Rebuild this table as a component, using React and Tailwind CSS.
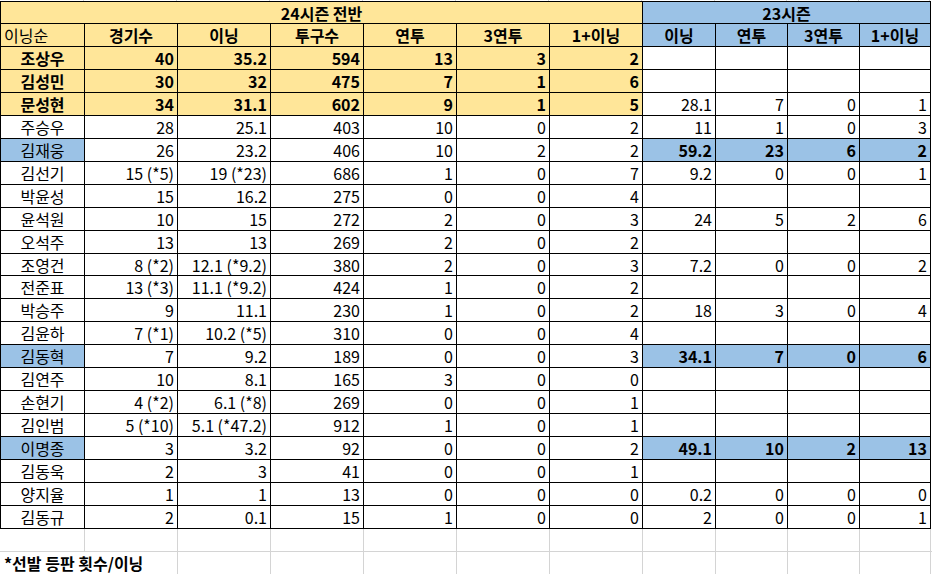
import React from 'react';
import clsx from 'clsx';

const widths = [
  'w-[84px]',
  'w-[93px]',
  'w-[93px]',
  'w-[93px]',
  'w-[93px]',
  'w-[93px]',
  'w-[93px]',
  'w-[73px]',
  'w-[72px]',
  'w-[72px]',
  'w-[71px]',
];

const heads = ['이닝순', '경기수', '이닝', '투구수', '연투', '3연투', '1+이닝', '이닝', '연투', '3연투', '1+이닝'];

// top: 24시즌 상위 3명 (노란 강조), hl: 23시즌 강조 (파란색)
const rows = [
  { name: '조상우', top: true, a: ['40', '35.2', '594', '13', '3', '2'], b: null },
  { name: '김성민', top: true, a: ['30', '32', '475', '7', '1', '6'], b: null },
  { name: '문성현', top: true, a: ['34', '31.1', '602', '9', '1', '5'], b: ['28.1', '7', '0', '1'] },
  { name: '주승우', a: ['28', '25.1', '403', '10', '0', '2'], b: ['11', '1', '0', '3'] },
  { name: '김재웅', hl: true, a: ['26', '23.2', '406', '10', '2', '2'], b: ['59.2', '23', '6', '2'] },
  { name: '김선기', a: ['15 (*5)', '19 (*23)', '686', '1', '0', '7'], b: ['9.2', '0', '0', '1'] },
  { name: '박윤성', a: ['15', '16.2', '275', '0', '0', '4'], b: null },
  { name: '윤석원', a: ['10', '15', '272', '2', '0', '3'], b: ['24', '5', '2', '6'] },
  { name: '오석주', a: ['13', '13', '269', '2', '0', '2'], b: null },
  { name: '조영건', a: ['8 (*2)', '12.1 (*9.2)', '380', '2', '0', '3'], b: ['7.2', '0', '0', '2'] },
  { name: '전준표', a: ['13 (*3)', '11.1 (*9.2)', '424', '1', '0', '2'], b: null },
  { name: '박승주', a: ['9', '11.1', '230', '1', '0', '2'], b: ['18', '3', '0', '4'] },
  { name: '김윤하', a: ['7 (*1)', '10.2 (*5)', '310', '0', '0', '4'], b: null },
  { name: '김동혁', hl: true, a: ['7', '9.2', '189', '0', '0', '3'], b: ['34.1', '7', '0', '6'] },
  { name: '김연주', a: ['10', '8.1', '165', '3', '0', '0'], b: null },
  { name: '손현기', a: ['4 (*2)', '6.1 (*8)', '269', '0', '0', '1'], b: null },
  { name: '김인범', a: ['5 (*10)', '5.1 (*47.2)', '912', '1', '0', '1'], b: null },
  { name: '이명종', hl: true, a: ['3', '3.2', '92', '0', '0', '2'], b: ['49.1', '10', '2', '13'] },
  { name: '김동욱', a: ['2', '3', '41', '0', '0', '1'], b: null },
  { name: '양지율', a: ['1', '1', '13', '0', '0', '0'], b: ['0.2', '0', '0', '0'] },
  { name: '김동규', a: ['2', '0.1', '15', '1', '0', '0'], b: ['2', '0', '0', '1'] },
];

const Cell = ({ w, className, children }) => (
  <div
    className={clsx(
      'flex h-full shrink-0 items-center overflow-hidden whitespace-nowrap border-r border-black px-[3px]',
      w,
      className
    )}
  >
    {children}
  </div>
);

const App = () => {
  return (
    <div className="h-[574px] w-[932px] overflow-hidden bg-white font-['Noto_Sans_CJK_KR',sans-serif] text-[16px] leading-none text-black">
      {/* 위쪽 잘린 행 */}
      <div className="flex h-px">
        {widths.map((w, i) => (
          <div key={i} className={clsx('h-full border-r border-[#d4d4d4]', w)} />
        ))}
      </div>

      <div className="w-[931px] border-l border-t border-black">
        {/* 시즌 헤더 */}
        <div className="flex h-[22px] border-b border-black font-bold">
          <Cell w="w-[642px]" className="justify-center bg-[#ffe699]">24시즌 전반</Cell>
          <Cell w="w-[288px]" className="justify-center bg-[#9bc2e6]">23시즌</Cell>
        </div>

        {/* 컬럼 헤더 */}
        <div className="flex h-[22.96px] border-b border-black">
          {heads.map((h, i) => (
            <Cell
              key={i}
              w={widths[i]}
              className={clsx(
                i === 0 ? 'justify-start' : 'justify-center font-bold',
                i < 7 ? 'bg-[#ffe699]' : 'bg-[#9bc2e6]'
              )}
            >
              {h}
            </Cell>
          ))}
        </div>

        {rows.map((r) => (
          <div key={r.name} className="flex h-[22.96px] border-b border-black">
            <Cell
              w={widths[0]}
              className={clsx(
                'justify-center',
                r.top && 'bg-[#ffe699] font-bold',
                r.hl && 'bg-[#9bc2e6]'
              )}
            >
              {r.name}
            </Cell>
            {r.a.map((v, i) => (
              <Cell
                key={i}
                w={widths[i + 1]}
                className={clsx('justify-end', r.top && 'bg-[#ffe699] font-bold')}
              >
                {v}
              </Cell>
            ))}
            {[0, 1, 2, 3].map((i) => (
              <Cell
                key={'b' + i}
                w={widths[i + 7]}
                className={clsx('justify-end', r.hl && 'bg-[#9bc2e6] font-bold')}
              >
                {r.b ? r.b[i] : ''}
              </Cell>
            ))}
          </div>
        ))}
      </div>

      {/* 빈 행 */}
      <div className="flex h-[22.96px] border-b border-[#d4d4d4]">
        <div className="h-full w-px" />
        {widths.map((w, i) => (
          <div key={i} className={clsx('h-full shrink-0 border-r border-[#d4d4d4]', w)} />
        ))}
      </div>

      {/* 주석 */}
      <div className="flex h-[22.96px] border-b border-[#d4d4d4]">
        <div className="h-full w-px" />
        <div className="flex h-full w-[177px] shrink-0 items-center whitespace-nowrap border-r border-[#d4d4d4] px-[3px] font-bold">
          *선발 등판 횟수/이닝
        </div>
        {widths.slice(2).map((w, i) => (
          <div key={i} className={clsx('h-full shrink-0 border-r border-[#d4d4d4]', w)} />
        ))}
      </div>
    </div>
  );
};

export default App;
